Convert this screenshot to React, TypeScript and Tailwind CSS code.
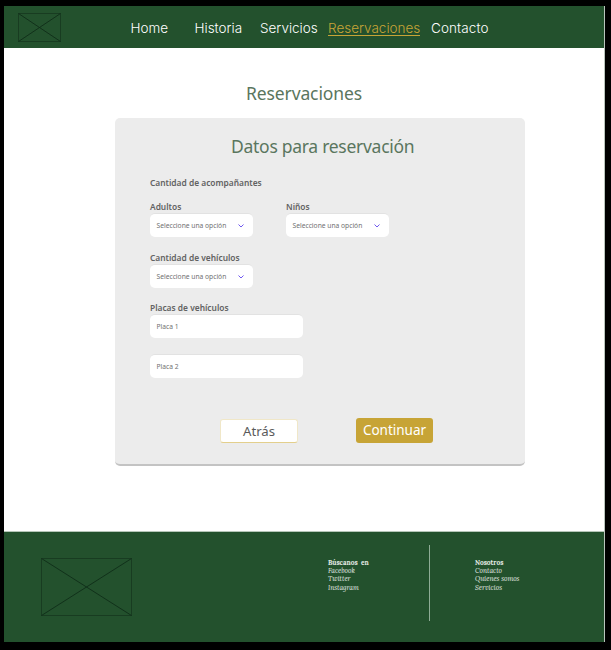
const sans = "font-['Noto_Sans','Open_Sans',sans-serif]";

function Placeholder({ className, w, h }: { className: string; w: number; h: number }) {
  return (
    <svg className={className} width={w} height={h} viewBox={`0 0 ${w} ${h}`} fill="none" stroke="#102e19">
      <rect x="0.5" y="0.5" width={w - 1} height={h - 1} strokeOpacity="0.6" />
      <path d={`M.5 .5L${w - 0.5} ${h - 0.5}M${w - 0.5} .5L.5 ${h - 0.5}`} strokeWidth="0.9" />
    </svg>
  );
}

function Select({ label }: { label: string }) {
  return (
    <div className="w-[103px]">
      <div className="h-[13px] text-[8.4px] leading-[13px] font-semibold whitespace-nowrap text-[#626262]">{label}</div>
      <button className="flex h-6 w-full items-center justify-between rounded-[5px] border-t border-[#e2e2e2] bg-white pt-px pr-[9px] pl-[6.5px] text-[6.7px] text-[#707070]">
        <span className="whitespace-nowrap">Seleccione una opción</span>
        <svg width="6" height="4" viewBox="0 0 6 4" fill="none" stroke="#7059f0" strokeWidth="1">
          <path d="M.5 .5L3 3L5.5 .5" />
        </svg>
      </button>
    </div>
  );
}

function Plate({ text }: { text: string }) {
  return (
    <div className="flex h-[24px] w-[153px] items-center rounded-[5px] border-t border-[#e2e2e2] bg-white pt-px pl-[6.5px] text-[6.7px] text-[#707070]">
      {text}
    </div>
  );
}

export default function App() {
  return (
    <div className={`h-[650px] w-[611px] overflow-hidden bg-black pt-[6px] pl-[4px] ${sans}`}>
      <div className="flex h-[636px] w-[601px] flex-col border-r border-[#b9c4bc] bg-white">
        <header className="flex h-[42px] shrink-0 bg-[#23512d] pt-[7px] pl-[14px]">
          <Placeholder className="shrink-0" w={43} h={29} />
          <nav className="flex pt-[7px] pl-[69.5px] font-['Inter',sans-serif] text-[13.5px] leading-[17px] font-light whitespace-nowrap text-white">
            <a className="w-[64px]">Home</a>
            <a className="w-[65.5px]">Historia</a>
            <a className="w-[68px]">Servicios</a>
            <a className="mr-[11px] h-[16px] w-[92px] border-b border-[#c7a436] text-[#c7a436]">Reservaciones</a>
            <a className="tracking-[0.1px]">Contacto</a>
          </nav>
        </header>

        <main className="flex h-[483px] shrink-0 flex-col pt-[33px] pl-[111px]">
          <h1 className="h-[37px] pl-[131px] text-[17.5px] leading-[24px] tracking-[-0.12px] text-[#5a765e]">Reservaciones</h1>
          <section className="flex h-[348px] w-[410px] flex-col rounded-[5px] border-b-2 border-[#c3c3c3] bg-[#ececec] pl-[35px]">
            <h2 className="mt-[16px] h-[24px] pl-[81px] text-[17.5px] leading-[24px] tracking-[-0.28px] text-[#5a765e]">Datos para reservación</h2>
            <p className="mt-[19px] h-[12px] text-[8.4px] leading-[12px] font-semibold text-[#626262]">Cantidad de acompañantes</p>
            <div className="mt-[11px] flex gap-[33px]">
              <Select label="Adultos" />
              <Select label="Niños" />
            </div>
            <div className="mt-[14px]">
              <Select label="Cantidad de vehículos" />
            </div>
            <p className="mt-[13px] h-[13px] text-[8.4px] leading-[13px] font-semibold text-[#626262]">Placas de vehículos</p>
            <Plate text="Placa 1" />
            <div className="h-[16px]" />
            <Plate text="Placa 2" />
            <div className="mt-[40px] flex pl-[70px]">
              <button className="mt-px h-[24px] w-[78px] rounded-[3px] border border-[#f0e7c8] border-b-[#e3cf8c] bg-white text-[13.2px] leading-[21px] text-[#5a5a5a]">Atrás</button>
              <button className="ml-[58px] h-[25px] w-[77px] rounded-[3px] bg-[#c7a436] text-[13.5px] leading-[23px] text-white">Continuar</button>
            </div>
          </section>
        </main>

        <footer className="flex h-[111px] shrink-0 border-t border-[#b5c6b8] bg-[#23512d] bg-clip-padding font-['Lora','Noto_Serif','Liberation_Serif',serif] text-[6.6px] leading-[8.4px] text-[#e6ece7]">
          <Placeholder className="mt-[26px] ml-[37px] shrink-0" w={91} h={58} />
          <div className="mt-[26.5px] ml-[196px] w-[101px] italic">
            <p className="font-bold not-italic">Búscanos&nbsp; en</p>
            <p>Facebook</p>
            <p>Twitter</p>
            <p>Instagram</p>
          </div>
          <div className="mt-[13px] h-[76px] w-px bg-[#8fac96]" />
          <div className="mt-[26.5px] ml-[45px] italic">
            <p className="font-bold not-italic">Nosotros</p>
            <p>Contacto</p>
            <p>Quienes somos</p>
            <p>Servicios</p>
          </div>
        </footer>
      </div>
    </div>
  );
}
